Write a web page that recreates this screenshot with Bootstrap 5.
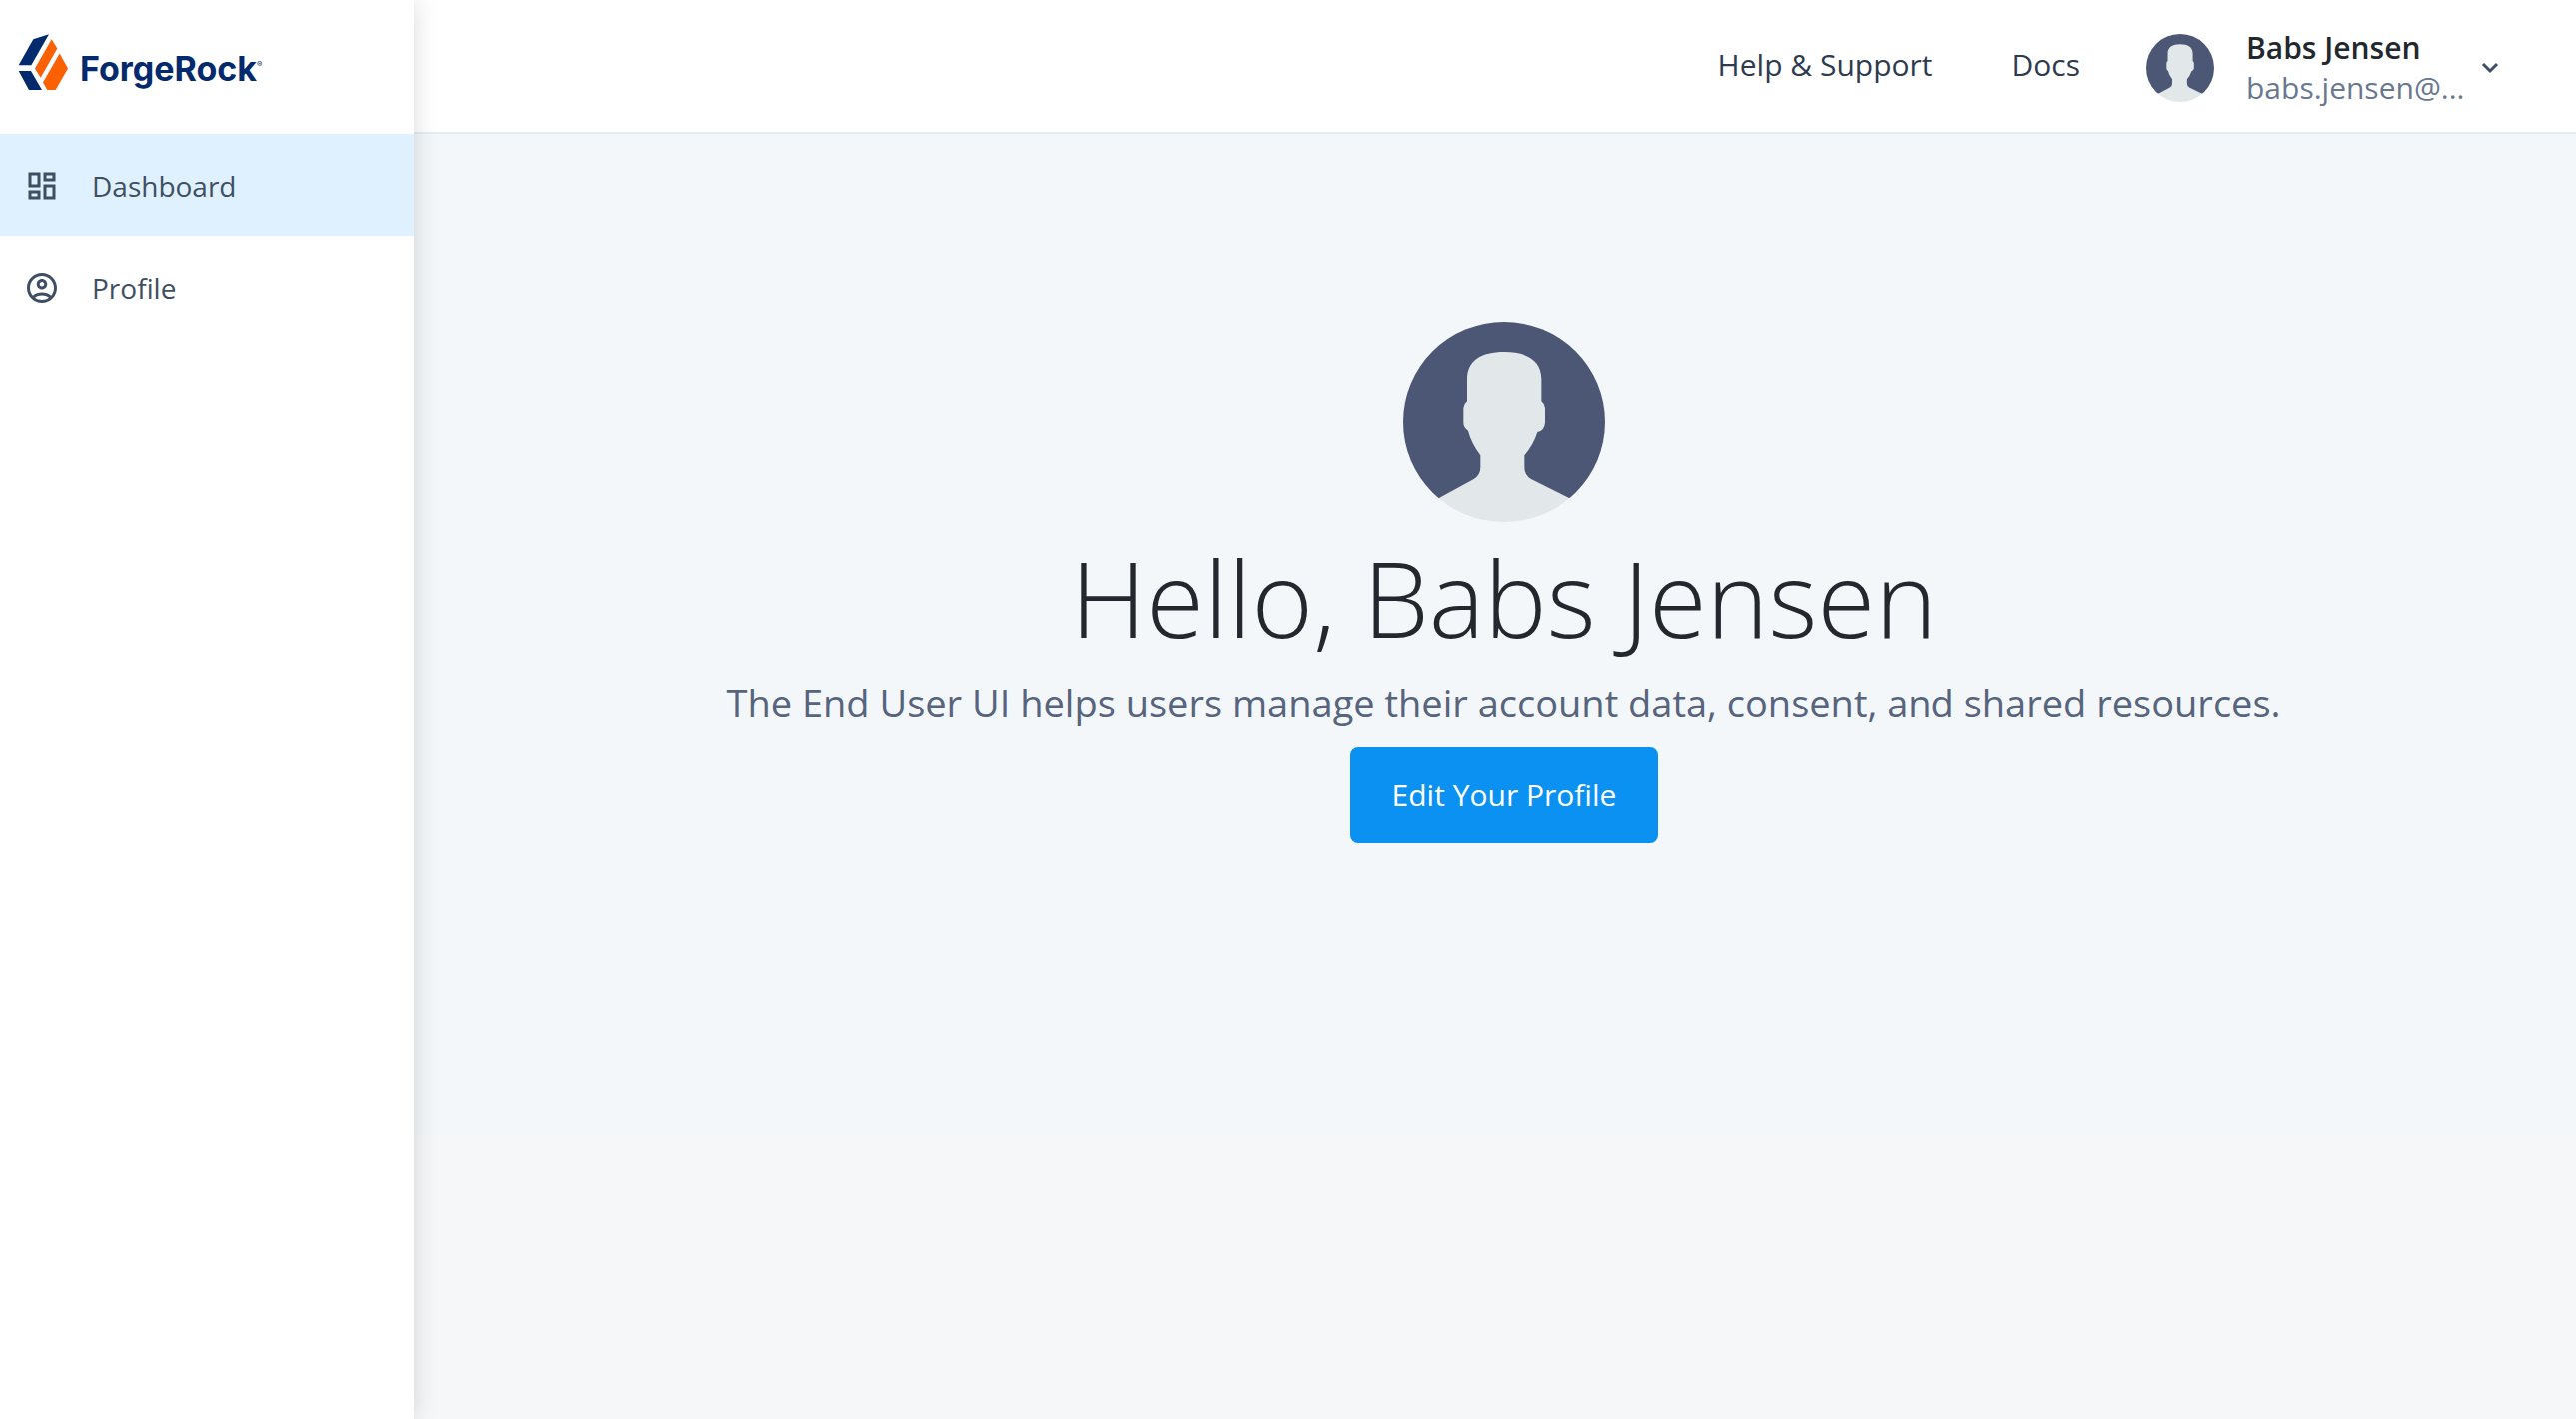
<!DOCTYPE html>
<html lang="en">
<head>
<meta charset="utf-8">
<meta name="viewport" content="width=device-width, initial-scale=1">
<title>Dashboard</title>
<link href="https://cdn.jsdelivr.net/npm/bootstrap@5.3.0/dist/css/bootstrap.min.css" rel="stylesheet">
<style>
  body { font-family: "Open Sans", "Noto Sans", sans-serif; background: #f6f7f9; color: #23282e; }
  .side-panel { width: 414px; background: #fff; box-shadow: 0 0 24px rgba(0,0,0,.15); z-index: 2; }
  .brand-row { height: 134px; padding: 0 18px; color: #032a6c; gap: 12px; }
  .brand-mark { width: 50px; height: 56px; margin-bottom: 10px; }
  .brand-word { font: 700 34px/40px Inter, sans-serif; padding-top: 4px; }
  .brand-word sup { font-size: 8px; font-weight: 400; top: -14px; }
  .side-panel .nav-link { height: 102px; padding: 2px 24px 0; gap: 32px; font-size: 28px; color: #3f4f63; }
  .side-panel .nav-link.active { background: #dff1fe; }
  .side-panel .nav-link svg { width: 36px; height: 36px; }
  .top-bar { height: 134px; border-bottom: 2px solid #e4ebf1; background: #fff; padding: 4px 76px 0 32px; }
  .top-bar .nav-link { font-size: 30px; line-height: 44px; color: #2e3b4f; padding: 0; }
  .top-links { gap: 80px; margin-right: 66px; padding-bottom: 6px; }
  .user-menu { background: none; border: 0; padding: 0; text-align: left; font-size: 30px; line-height: 40px; color: #23282e; }
  .avatar { border-radius: 50%; }
  .user-menu .avatar { width: 68px; height: 68px; margin-right: 32px; }
  .user-text { width: 220px; margin-right: 14px; }
  .user-mail { color: #69788f; }
  .chevron { width: 20px; height: 20px; }
  .hero { background: #f3f7fa; padding: 188px 32px 292px 50px; }
  .hero .avatar { width: 202px; height: 200px; }
  .hero h1 { font-size: 105px; line-height: 128px; font-weight: 300; margin: 12px 0; }
  .hero p { font-size: 38px; line-height: 58px; color: #56657d; margin: 0 0 16px; }
  .hero .btn { --bs-btn-bg: #0a91f2; --bs-btn-border-color: #0a91f2; --bs-btn-padding-x: 40px; --bs-btn-padding-y: 24px; --bs-btn-font-size: 30px; --bs-btn-line-height: 44px; --bs-btn-border-radius: 8px; border-width: 2px; }
</style>
<script src="https://cdn.jsdelivr.net/npm/bootstrap@5.3.0/dist/js/bootstrap.bundle.min.js"></script>
</head>
<body>
<svg class="d-none" aria-hidden="true">
  <symbol id="person" viewBox="72 66 606 600" preserveAspectRatio="none">
    <path fill="#4c5775" d="M72 66H678V594H72Z"/>
    <path fill="#e2e8ea" d="M180 594L284 537Q304 525 304 502V466Q276 428 267 392Q253 382 253 368V324Q254 312 264 304V238C264 182 306 156 375 156S487 182 487 238V304Q497 312 498 324V368Q496 392 475 396Q464 432 436 466V502Q436 526 456 537L570 594L678 640V666H72V640Z"/>
  </symbol>
</svg>
<div class="d-flex min-vh-100">
  <aside class="side-panel flex-shrink-0 position-relative">
    <a href="#" class="brand-row d-flex align-items-center text-decoration-none" aria-label="ForgeRock home">
      <svg class="brand-mark" viewBox="54 101 150 169" preserveAspectRatio="none" aria-hidden="true">
        <path fill="#032a6c" d="M100 117L147 102L94 195H56ZM56 213H93L126 270H87Z"/>
        <path fill="#fb6003" d="M155 117L172 145L122 233L105 205ZM179 160L204 205L167 270H142L129 247Z"/>
      </svg>
      <span class="brand-word">ForgeRock<sup>®</sup></span>
    </a>
    <nav class="nav flex-column">
      <a href="#" class="nav-link active d-flex align-items-center" aria-current="page">
        <svg viewBox="0 0 24 24" fill="currentColor" aria-hidden="true"><path d="M19 5v2h-4V5h4M9 5v6H5V5h4m10 8v6h-4v-6h4M9 17v2H5v-2h4M21 3h-8v6h8V3zM11 3H3v10h8V3zm10 8h-8v10h8V11zm-10 4H3v6h8v-6z"/></svg>
        <span>Dashboard</span>
      </a>
      <a href="#" class="nav-link d-flex align-items-center">
        <svg viewBox="0 0 24 24" fill="currentColor" aria-hidden="true"><path d="M12 2C6.480 2 2 6.480 2 12s4.480 10 10 10 10-4.480 10-10S17.520 2 12 2zM7.350 18.500C8.660 17.560 10.260 17 12 17s3.340.560 4.650 1.500C15.340 19.440 13.740 20 12 20s-3.340-.560-4.650-1.500zm10.790-1.380C16.450 15.800 14.320 15 12 15s-4.450.800-6.140 2.120C4.700 15.730 4 13.950 4 12c0-4.420 3.580-8 8-8s8 3.580 8 8c0 1.950-.700 3.730-1.860 5.120zM12 6c-1.930 0-3.500 1.570-3.500 3.500S10.070 13 12 13s3.500-1.570 3.500-3.500S13.930 6 12 6zm0 5c-.830 0-1.500-.670-1.500-1.500S11.170 8 12 8s1.500.670 1.500 1.500S12.830 11 12 11z"/></svg>
        <span>Profile</span>
      </a>
    </nav>
  </aside>
  <div class="flex-grow-1">
    <header class="top-bar d-flex align-items-center justify-content-end">
      <nav class="top-links d-flex">
        <a href="#" class="nav-link">Help &amp; Support</a>
        <a href="#" class="nav-link">Docs</a>
      </nav>
      <button type="button" class="user-menu d-flex align-items-center" aria-haspopup="true" aria-expanded="false">
        <svg class="avatar" aria-hidden="true"><use href="#person"/></svg>
        <span class="user-text">
          <span class="d-block fw-semibold">Babs Jensen</span>
          <span class="user-mail d-block text-nowrap">babs.jensen@...</span>
        </span>
        <svg class="chevron" viewBox="0 0 20 20" fill="none" stroke="#3f4f63" stroke-width="3" aria-hidden="true"><path d="M3 6L10 13L17 6"/></svg>
      </button>
    </header>
    <main>
      <section class="hero text-center">
        <svg class="avatar d-block mx-auto" aria-hidden="true"><use href="#person"/></svg>
        <h1>Hello, Babs Jensen</h1>
        <p>The End User UI helps users manage their account data, consent, and shared resources.</p>
        <button type="button" class="btn btn-primary">Edit Your Profile</button>
      </section>
    </main>
  </div>
</div>
</body>
</html>
